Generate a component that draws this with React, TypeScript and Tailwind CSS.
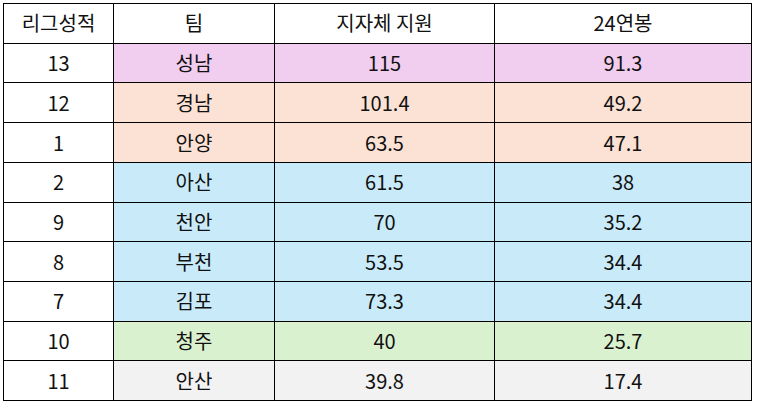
const rows = [
  { rank: "13", team: "성남", support: "115", salary: "91.3", bg: "bg-[#f1cdef]" },
  { rank: "12", team: "경남", support: "101.4", salary: "49.2", bg: "bg-[#fce2d5]" },
  { rank: "1", team: "안양", support: "63.5", salary: "47.1", bg: "bg-[#fce2d5]" },
  { rank: "2", team: "아산", support: "61.5", salary: "38", bg: "bg-[#c9ebf9]" },
  { rank: "9", team: "천안", support: "70", salary: "35.2", bg: "bg-[#c9ebf9]" },
  { rank: "8", team: "부천", support: "53.5", salary: "34.4", bg: "bg-[#c9ebf9]" },
  { rank: "7", team: "김포", support: "73.3", salary: "34.4", bg: "bg-[#c9ebf9]" },
  { rank: "10", team: "청주", support: "40", salary: "25.7", bg: "bg-[#daf1d0]" },
  { rank: "11", team: "안산", support: "39.8", salary: "17.4", bg: "bg-[#f2f2f2]" },
];

const cell = "border border-black text-center align-middle p-0 leading-none";

export default function App() {
  return (
    <div className="w-[757px] h-[404px] bg-white pt-[3px] pl-[3px] font-['Noto_Sans_CJK_KR','Noto_Sans',sans-serif] text-[20px] text-[#111]">
      <table className="border-collapse table-fixed w-[748px]">
        <colgroup>
          <col className="w-[110px]" />
          <col className="w-[161px]" />
          <col className="w-[220px]" />
          <col className="w-[257px]" />
        </colgroup>
        <thead>
          <tr className="h-[39.8px] bg-white">
            <th className={`${cell} font-normal`}>리그성적</th>
            <th className={`${cell} font-normal`}>팀</th>
            <th className={`${cell} font-normal`}>지자체 지원</th>
            <th className={`${cell} font-normal`}>24연봉</th>
          </tr>
        </thead>
        <tbody>
          {rows.map((r) => (
            <tr key={r.team} className="h-[39.7px]">
              <td className={`${cell} bg-white`}>{r.rank}</td>
              <td className={`${cell} ${r.bg}`}>{r.team}</td>
              <td className={`${cell} ${r.bg}`}>{r.support}</td>
              <td className={`${cell} ${r.bg}`}>{r.salary}</td>
            </tr>
          ))}
        </tbody>
      </table>
    </div>
  );
}
